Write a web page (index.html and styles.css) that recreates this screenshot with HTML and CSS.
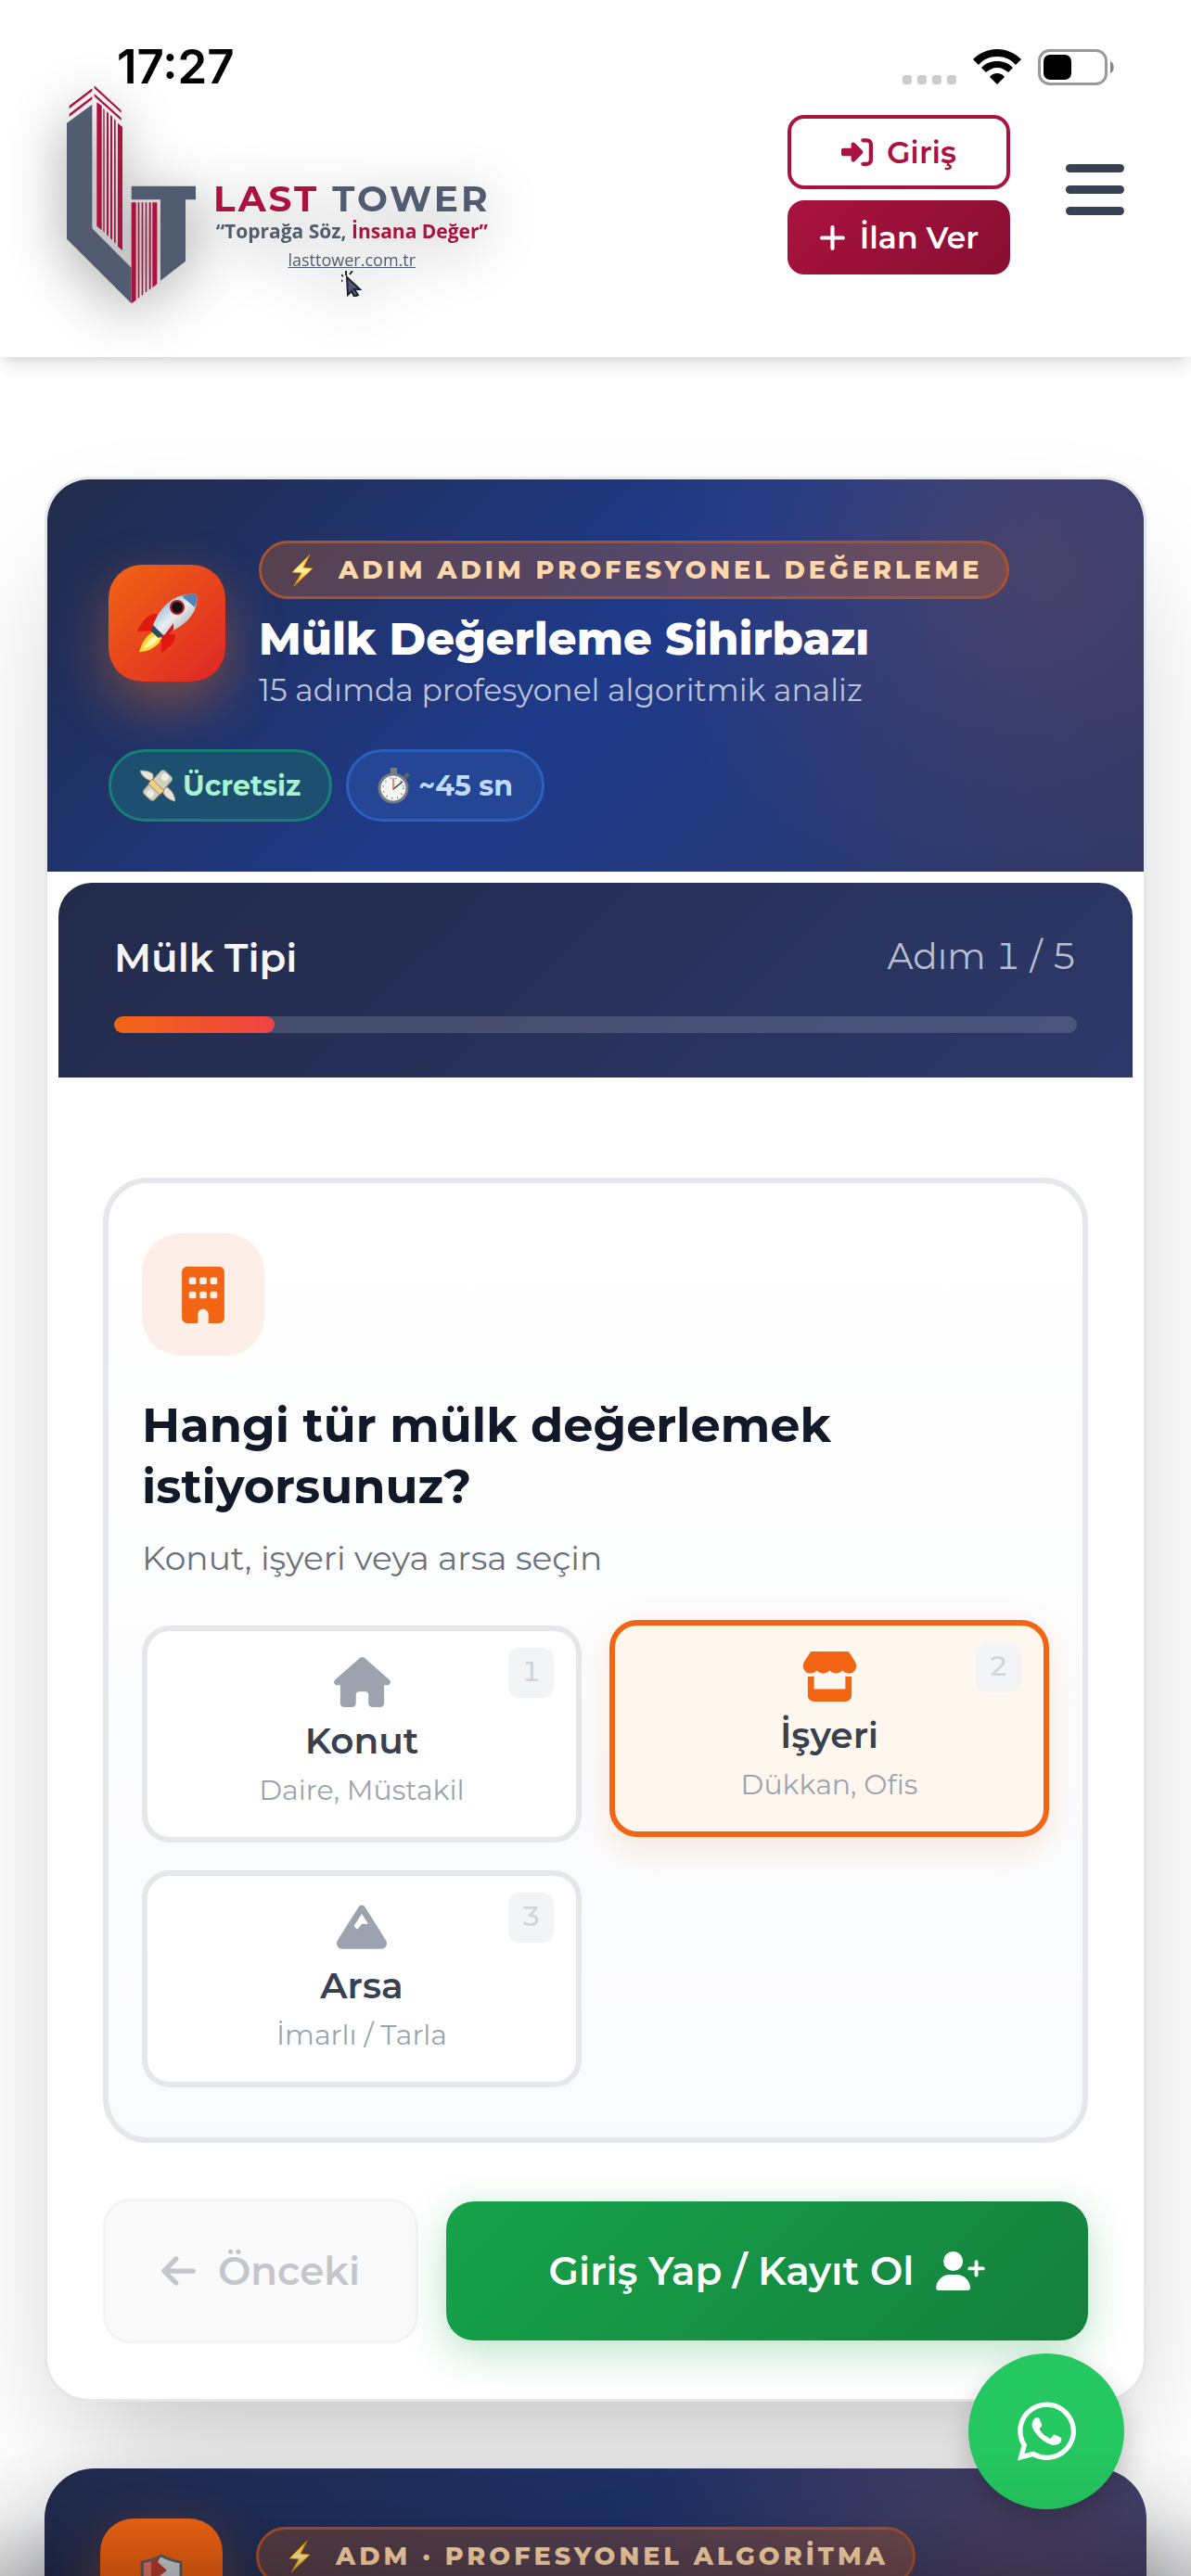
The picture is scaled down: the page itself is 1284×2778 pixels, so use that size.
FILE: index.html
```html
<!DOCTYPE html>
<html lang="tr">
<head>
<meta charset="utf-8">
<meta name="viewport" content="width=device-width, initial-scale=1">
<title>Last Tower</title>
<link rel="stylesheet" href="styles.css">
</head>
<body>
<svg class="defs" aria-hidden="true">
  <defs>
    <linearGradient id="boltFill" x1="0" y1="0" x2="0" y2="1"><stop offset="0" stop-color="#ffb81f"/><stop offset=".5" stop-color="#fff3a0"/><stop offset="1" stop-color="#f79c00"/></linearGradient>
    <linearGradient id="hull" x1="0" y1="0" x2="1" y2="1"><stop offset="0" stop-color="#5d9bd0"/><stop offset=".5" stop-color="#e9edf0"/><stop offset="1" stop-color="#8f9aa3"/></linearGradient>
    <symbol id="bolt" viewBox="0 0 24 36"><path d="M20 1 1 20l10 1L3 35l20-19-10-1z" fill="url(#boltFill)" stroke="#d98a00" stroke-width="1"/></symbol>
  </defs>
</svg>

<div class="app">
  <div class="status">
    <span class="status-time">17:27</span>
    <span class="status-icons">
      <span class="dots"><i></i><i></i><i></i><i></i></span>
      <svg width="52" height="38" viewBox="0 0 52 38" aria-hidden="true"><path d="M26 0C36 0 45 4 52 11L46 17C41 11 34 8 26 8S11 11 6 17L0 11C7 4 16 0 26 0zM26 13c7 0 12 2 17 7l-5 5c-4-3-7-5-12-5s-8 2-12 5l-5-5c5-5 10-7 17-7zM26 26c3 0 6 1 8 4l-8 8-8-8c2-3 5-4 8-4z"/></svg>
      <svg width="83" height="39" viewBox="0 0 83 39" aria-hidden="true"><rect x="1.500" y="1.500" width="72" height="36" rx="11" fill="none" stroke="#999" stroke-width="3"/><rect x="6" y="6" width="30" height="27" rx="7"/><path d="M78 13c5 2 5 11 0 13z" fill="#888"/></svg>
    </span>
  </div>

  <header class="header">
    <a class="logo" href="#" aria-label="Last Tower">
      <svg width="140" height="236" viewBox="39 35 420 708" aria-hidden="true">
        <g fill="#525c70"><path d="M39 157 121 97V498L248 625V741L39 532z"/><path d="M248 361H456V405H423V604L342 667V405H248z"/></g>
        <g fill="#ab1240"><path d="M47 101 121 45V54L47 111zM47 127 121 71V80L47 137zM128 36 215 116V124L128 45zM128 62 215 140V149L128 71z"/>
        <path d="M136 90 152 101V504L136 490zM157 110 161 114V512L157 508zM168 120 174 125V524L168 518zM180 131 186 136V535L180 530zM192 144 197 148V547L192 542zM204 157 219 170V570L204 556z"/>
        <path d="M248 414H263V730L248 741zM269 414H274V721L269 725zM281 414H286V712L281 716zM293 414H298V702L293 706zM305 414H311V693L305 697zM316 414H331V678L316 690z"/></g>
      </svg>
      <span class="logo-text">
        <span class="logo-name"><b>LAST</b> TOWER</span>
        <span class="logo-tag">“Toprağa Söz, <b>İnsana Değer”</b></span>
        <span class="logo-url">lasttower.com.tr</span>
        <svg width="22" height="28" viewBox="0 0 22 28" aria-hidden="true"><path d="M6 7 20 20h-6l4 6-4 2-3-6-4 4z" fill="#525c70" stroke="#1c2233" stroke-width="2"/><path d="M5 5 5 0M2 6-1 4M9 4l3-4M1 10l-2 2" stroke="#222" stroke-width="2"/></svg>
      </span>
    </a>
    <div class="header-side">
      <div class="header-actions">
        <button class="btn btn-outline" type="button"><svg width="34" height="34" viewBox="0 0 512 512" aria-hidden="true"><path d="M217.900 105.900L340.700 228.700c7.200 7.200 11.300 17.100 11.300 27.300s-4.100 20.100-11.300 27.300L217.900 406.100c-6.400 6.400-15 9.900-24 9.900c-18.700 0-33.900-15.200-33.900-33.900l0-62.100L32 320c-17.700 0-32-14.300-32-32l0-64c0-17.700 14.300-32 32-32l128 0 0-62.100c0-18.700 15.200-33.900 33.900-33.900c9 0 17.600 3.600 24 9.900zM352 416l64 0c17.700 0 32-14.300 32-32l0-256c0-17.700-14.300-32-32-32l-64 0c-17.700 0-32-14.300-32-32s14.300-32 32-32l64 0c53 0 96 43 96 96l0 256c0 53-43 96-96 96l-64 0c-17.700 0-32-14.300-32-32s14.300-32 32-32z"/></svg>Giriş</button>
        <button class="btn btn-solid" type="button"><svg width="29" height="33" viewBox="0 0 448 512" aria-hidden="true"><path d="M256 80c0-17.700-14.300-32-32-32s-32 14.300-32 32V224H48c-17.700 0-32 14.300-32 32s14.300 32 32 32H192V432c0 17.700 14.300 32 32 32s32-14.300 32-32V288H400c17.700 0 32-14.300 32-32s-14.300-32-32-32H256V80z"/></svg>İlan Ver</button>
      </div>
      <button class="menu" type="button" aria-label="Menü"><i></i><i></i><i></i></button>
    </div>
  </header>

  <main class="main">
    <section class="card">
      <div class="hero">
        <div class="hero-row">
          <span class="hero-icon">
            <svg width="66" height="64" viewBox="0 0 66 64" aria-hidden="true"><path d="M22 22C12 22 6 30 1 41l20-1zM42 44c1 8-5 13-15 20l0-20z" fill="#e0190f"/><path d="M20 40C9 46 6 54 3 63c9 0 18-4 25-14z" fill="#ffd83a"/><path d="M20 45c-6 4-9 9-12 14 7-2 12-4 16-10z" fill="#fff7b0"/><path d="M65 1C45-1 28 9 18 34c-1 4 7 12 11 11C52 36 68 21 65 1z" fill="url(#hull)"/><path d="M65 1c-6-1-12 0-16 2l14 12c2-4 3-9 2-14z" fill="#4e84bb"/><path d="M18 34l-2 7 8 7 5-3z" fill="#2d4a66"/><circle cx="44" cy="15" r="8" fill="#c21b1b"/><circle cx="44" cy="15" r="6" fill="#0c1418"/><path d="M40 32 25 52l3-1 12-12z" fill="#d3171b"/></svg>
          </span>
          <div class="hero-text">
            <span class="badge"><svg width="24" height="36" aria-hidden="true"><use href="#bolt"/></svg>ADIM ADIM PROFESYONEL DEĞERLEME</span>
            <h1 class="hero-title">Mülk Değerleme Sihirbazı</h1>
            <p class="hero-sub">15 adımda profesyonel algoritmik analiz</p>
          </div>
        </div>
        <div class="chips">
          <span class="chip chip-green"><svg width="38" height="36" viewBox="0 0 38 36" aria-hidden="true"><path d="M14 13C9 13 2 9 0 2c6 0 11 1 14 4zM26 19c6 1 11 8 12 16-6-1-11-5-13-9z" fill="#e6e2d8" stroke="#a9a598" stroke-width="1"/><g transform="rotate(-48 19 18)"><rect x="2" y="10" width="34" height="16" rx="4" fill="#cfd0bf" stroke="#85877a"/><circle cx="7" cy="18" r="4" fill="#eeeee4"/><circle cx="31" cy="18" r="4" fill="#eeeee4"/></g><path d="m13 11 13 13-5 4L9 16z" fill="#efcf8a" stroke="#b48a3a"/></svg>Ücretsiz</span>
          <span class="chip chip-blue"><svg width="36" height="40" viewBox="0 0 36 40" aria-hidden="true"><path d="M14 1h7v6h-7z" fill="#777b84"/><path d="m28 10 4-4 3 3-4 4z" fill="#62666e"/><circle cx="17" cy="23" r="15" fill="#f6f6f4" stroke="#777b84" stroke-width="3"/><circle cx="17" cy="23" r="11" fill="none" stroke="#777" stroke-width="2" stroke-dasharray="1 5"/><path d="M17 24 27 16" stroke="#333" stroke-width="1.500"/><path d="M17 25V12" stroke="#e8663c" stroke-width="1.500"/></svg>~45 sn</span>
        </div>
      </div>

      <div class="body">
        <div class="progress-head">
          <div class="progress-row"><h2 class="progress-title">Mülk Tipi</h2><span class="progress-step">Adım 1 / 5</span></div>
          <div class="track" role="progressbar" aria-label="Mülk Tipi" aria-valuemin="0" aria-valuemax="6" aria-valuenow="1"><div class="fill"></div></div>
        </div>

        <div class="form">
          <section class="question">
            <span class="q-icon"><svg width="46" height="61" viewBox="0 0 384 512" aria-hidden="true"><path fill-rule="evenodd" d="M48 0C21.500 0 0 21.500 0 48V464c0 26.500 21.500 48 48 48h96V432c0-26.500 21.500-48 48-48s48 21.500 48 48v80h96c26.500 0 48-21.500 48-48V48c0-26.500-21.500-48-48-48H48zM64 240c0-8.800 7.200-16 16-16h32c8.800 0 16 7.200 16 16v32c0 8.800-7.200 16-16 16H80c-8.800 0-16-7.200-16-16V240zm112-16h32c8.800 0 16 7.200 16 16v32c0 8.800-7.200 16-16 16H176c-8.800 0-16-7.200-16-16V240c0-8.800 7.200-16 16-16zm80 16c0-8.800 7.200-16 16-16h32c8.800 0 16 7.200 16 16v32c0 8.800-7.200 16-16 16H272c-8.800 0-16-7.200-16-16V240zM80 96h32c8.800 0 16 7.200 16 16v32c0 8.800-7.200 16-16 16H80c-8.800 0-16-7.200-16-16V112c0-8.800 7.200-16 16-16zm80 16c0-8.800 7.200-16 16-16h32c8.800 0 16 7.200 16 16v32c0 8.800-7.200 16-16 16H176c-8.800 0-16-7.200-16-16V112zM272 96h32c8.800 0 16 7.200 16 16v32c0 8.800-7.200 16-16 16H272c-8.800 0-16-7.200-16-16V112c0-8.800 7.200-16 16-16z"/></svg></span>
            <h2 class="q-title">Hangi tür mülk değerlemek istiyorsunuz?</h2>
            <p class="q-sub">Konut, işyeri veya arsa seçin</p>
            <div class="options">
              <button class="option" type="button">
                <kbd class="key">1</kbd>
                <svg width="61" height="54" viewBox="0 0 576 512" aria-hidden="true"><path d="M575.800 255.500c0 18-15 32.100-32 32.100h-32l.7 160.200c0 2.700-.2 5.400-.5 8.100V472c0 22.100-17.900 40-40 40H456c-1.100 0-2.200 0-3.300-.1c-1.400 .1-2.800 .1-4.200 .1H416 392c-22.100 0-40-17.900-40-40V448 384c0-17.700-14.300-32-32-32H256c-17.700 0-32 14.300-32 32v64 24c0 22.100-17.900 40-40 40H160 128.100c-1.500 0-3-.1-4.500-.2c-1.200 .1-2.400 .2-3.600 .2H104c-22.100 0-40-17.900-40-40V360c0-.9 0-1.900 .1-2.800V287.600H32c-18 0-32-14-32-32.100c0-9 3-17 10-24L266.400 8c7-7 15-8 22-8s15 2 21 7L564.800 231.500c8 7 12 15 11 24z"/></svg>
                <span class="option-label">Konut</span><span class="option-sub">Daire, Müstakil</span>
              </button>
              <button class="option selected" type="button" aria-pressed="true">
                <kbd class="key">2</kbd>
                <svg width="61" height="54" viewBox="0 0 576 512" aria-hidden="true"><path d="M547.600 103.800L490.300 13.100C485.200 5 476.100 0 466.400 0H109.600C99.900 0 90.800 5 85.700 13.100L28.300 103.800c-29.600 46.800-3.400 111.900 51.900 119.400c4 .5 8.100 .8 12.100 .8c26.100 0 49.300-11.400 65.200-29c15.900 17.600 39.100 29 65.200 29c26.100 0 49.300-11.400 65.200-29c15.900 17.600 39.100 29 65.200 29c26.200 0 49.300-11.400 65.200-29c16 17.600 39.100 29 65.200 29c4.100 0 8.100-.3 12.100-.8c55.500-7.400 81.800-72.500 52.100-119.400zM499.700 254.900l-.1 0c-5.300 .7-10.700 1.100-16.200 1.100c-12.400 0-24.300-1.900-35.400-5.300V384H128V250.600c-11.200 3.500-23.200 5.400-35.600 5.400c-5.500 0-11-.4-16.300-1.100l-.1 0c-4.100-.6-8.100-1.300-12-2.300V384v64c0 35.300 28.700 64 64 64H448c35.300 0 64-28.700 64-64V384 252.600c-4 1-8 1.800-12.300 2.300z"/></svg>
                <span class="option-label">İşyeri</span><span class="option-sub">Dükkan, Ofis</span>
              </button>
              <button class="option" type="button">
                <kbd class="key">3</kbd>
                <svg width="54" height="54" viewBox="0 0 512 512" aria-hidden="true"><path d="M256 32c12.500 0 24.100 6.400 30.800 17L503.400 394.400c5.600 8.900 8.600 19.200 8.600 29.700c0 30.900-25 55.900-55.900 55.900H55.900C25 480 0 455 0 424.100c0-10.500 3-20.800 8.600-29.700L225.200 49c6.600-10.600 18.300-17 30.800-17zm65 192L256 120.400 176.900 246.500l18.300 24.400c6.400 8.500 19.200 8.500 25.600 0l25.600-34.100c6-8.100 15.500-12.800 25.600-12.800h49z"/></svg>
                <span class="option-label">Arsa</span><span class="option-sub">İmarlı / Tarla</span>
              </button>
            </div>
          </section>

          <div class="nav">
            <button class="nav-btn prev" type="button" disabled><svg width="37" height="42" viewBox="0 0 448 512" aria-hidden="true"><path d="M9.400 233.400c-12.500 12.500-12.500 32.800 0 45.300l160 160c12.500 12.500 32.800 12.500 45.300 0s12.500-32.800 0-45.300L109.200 288 416 288c17.700 0 32-14.300 32-32s-14.300-32-32-32l-306.700 0L214.600 118.600c12.500-12.500 12.500-32.800 0-45.300s-32.800-12.500-45.300 0l-160 160z"/></svg>Önceki</button>
            <button class="nav-btn next" type="button">Giriş Yap / Kayıt Ol<svg width="53" height="42" viewBox="0 0 640 512" aria-hidden="true"><path d="M96 128a128 128 0 1 1 256 0A128 128 0 1 1 96 128zM0 482.300C0 383.800 79.800 304 178.300 304h91.400C368.200 304 448 383.800 448 482.300c0 16.400-13.300 29.700-29.700 29.700H29.700C13.300 512 0 498.700 0 482.300zM504 312V248H440c-13.300 0-24-10.700-24-24s10.700-24 24-24h64V136c0-13.300 10.700-24 24-24s24 10.700 24 24v64h64c13.300 0 24 10.700 24 24s-10.700 24-24 24H552v64c0 13.300-10.700 24-24 24s-24-10.700-24-24z"/></svg></button>
          </div>
        </div>
      </div>
    </section>

    <section class="card-next">
      <span class="hero-icon shield">
        <svg width="46" height="56" viewBox="0 0 46 56" aria-hidden="true"><path d="M23 1C16 5 8 7 2 8v20c0 14 9 21 21 27 12-6 21-13 21-27V8C38 7 30 5 23 1z" fill="#c9ccd1"/><path d="M2 8c6-1 14-3 21-7L19 9l10 9-11 8 11 8-7 21C11 49 2 42 2 28z" fill="#b93a2c"/><path d="M4 9l8-2v36C7 39 4 35 4 28z" fill="#dd7466"/><path d="M23 2C16 6 8 8 2 9v19c0 14 9 20 21 26 12-6 21-12 21-26V9C38 8 30 6 23 2z" fill="none" stroke="#5d5d62" stroke-width="3"/></svg>
      </span>
      <span class="badge"><svg width="24" height="36" aria-hidden="true"><use href="#bolt"/></svg>ADM · PROFESYONEL ALGORİTMA</span>
    </section>
  </main>
</div>

<a class="whatsapp" href="#" aria-label="WhatsApp"><svg width="63" height="72" viewBox="0 0 448 512" aria-hidden="true"><path d="M380.900 97.100C339 55.100 283.200 32 223.900 32c-122.400 0-222 99.600-222 222 0 39.100 10.200 77.300 29.600 111L0 480l117.700-30.900c32.400 17.700 68.900 27 106.100 27h.1c122.300 0 224.100-99.600 224.100-222 0-59.300-25.200-115-67.100-157zm-157 341.600c-33.200 0-65.700-8.900-94-25.700l-6.700-4-69.800 18.300L72 359.200l-4.400-7c-18.500-29.400-28.200-63.300-28.200-98.200 0-101.700 82.800-184.500 184.600-184.500 49.300 0 95.600 19.200 130.400 54.100 34.800 34.900 56.200 81.200 56.100 130.500 0 101.800-84.900 184.600-186.600 184.600zm101.200-138.200c-5.500-2.800-32.800-16.200-37.900-18-5.100-1.900-8.800-2.800-12.500 2.800-3.700 5.600-14.300 18-17.600 21.800-3.200 3.700-6.500 4.200-12 1.400-32.600-16.300-54-29.100-75.500-66-5.700-9.800 5.700-9.100 16.300-30.300 1.800-3.700.9-6.900-.5-9.700-1.400-2.800-12.500-30.100-17.100-41.200-4.500-10.800-9.100-9.300-12.500-9.500-3.200-.2-6.900-.2-10.600-.2-3.700 0-9.700 1.400-14.800 6.900-5.100 5.600-19.400 19-19.400 46.300 0 27.300 19.900 53.700 22.600 57.400 2.800 3.700 39.100 59.700 94.800 83.800 35.200 15.200 49 16.500 66.600 13.900 10.700-1.600 32.800-13.400 37.400-26.400 4.600-13 4.600-24.100 3.200-26.400-1.300-2.500-5-3.900-10.500-6.600z"/></svg></a>
<div class="shade"></div>
</body>
</html>
```
FILE: styles.css
```css
*, *::before, *::after { box-sizing: border-box; }
body {
  margin: 0;
  font-family: Montserrat, Inter, "Open Sans", sans-serif;
  color: #111827;
  background: #fff;
}
h1, h2, p { margin: 0; }
button { font: inherit; cursor: pointer; }
svg { display: block; flex: none; fill: currentColor; }
.defs { position: absolute; width: 0; height: 0; }
.app { height: 100vh; overflow: hidden auto; scrollbar-width: none; }

/* Status bar, over the page header */
.status {
  position: absolute;
  inset: 0 0 auto;
  z-index: 3;
  display: flex;
  justify-content: space-between;
  padding: 53px 82px 0 126px;
  color: #000;
}
.status-time { font: 600 51px/38px Inter, sans-serif; }
.status-icons { display: flex; align-items: flex-start; gap: 18px; }
.dots { display: flex; gap: 6px; padding-top: 28px; }
.dots i { width: 10px; height: 10px; border-radius: 3px; background: #ccc; }

/* Header */
.header {
  position: relative;
  z-index: 2;
  display: flex;
  align-items: center;
  justify-content: space-between;
  padding: 92px 72px 57px;
  background: #fff;
  box-shadow: 0 12px 18px -3px rgba(0, 0, 0, .1), 0 6px 12px -6px rgba(0, 0, 0, .1);
}
.logo {
  display: flex;
  gap: 18px;
  color: #525c70;
  text-decoration: none;
  filter: drop-shadow(0 12px 30px rgba(0, 0, 0, .4));
}
.logo b { color: #ab1240; font-weight: inherit; }
.logo-text { display: flex; flex-direction: column; align-items: center; padding-top: 101px; }
.logo-name { font-size: 39px; line-height: 42px; font-weight: 700; letter-spacing: 3px; }
.logo-tag { font: 700 21px/28px "Open Sans", sans-serif; }
.logo-url { font: 400 18px/24px "Open Sans", sans-serif; text-decoration: underline; margin-top: 5px; }
.header-side { display: flex; align-items: center; gap: 60px; }
.header-actions { display: flex; flex-direction: column; gap: 12px; width: 240px; }
.btn {
  display: flex;
  align-items: center;
  justify-content: center;
  gap: 15px;
  height: 80px;
  border: 4px solid #ab1240;
  border-radius: 18px;
  font-size: 33px;
  font-weight: 600;
}
.btn-outline { background: #fff; color: #ab1240; }
.btn-solid { border: 0; background: linear-gradient(135deg, #ab1240, #870e31); color: #fff; }
.menu {
  display: flex;
  flex-direction: column;
  gap: 14px;
  width: 63px;
  padding: 0 0 12px;
  border: 0;
  background: none;
}
.menu i { height: 9px; border-radius: 5px; background: #374151; }

/* Wizard card */
.main { padding: 129px 48px 0; }
.card {
  border: 3px solid #e5e7eb;
  border-radius: 48px;
  background: #fff;
  overflow: hidden;
  box-shadow: 0 75px 150px -36px rgba(0, 0, 0, .25);
}
.hero {
  padding: 66px 66px 54px;
  background:
    radial-gradient(circle at 90% 20%, rgba(249, 115, 22, .16), transparent 420px),
    linear-gradient(135deg, #222b4a, #1e3a8a 50%, #2d3768);
}
.hero-row { display: flex; align-items: center; gap: 36px; }
.hero-icon {
  display: grid;
  place-items: center;
  flex: none;
  width: 126px;
  height: 126px;
  border-radius: 36px;
  background: linear-gradient(135deg, #f26514, #dc2626);
  box-shadow: 0 24px 60px rgba(249, 115, 22, .4);
}
.hero-text { display: flex; flex-direction: column; align-items: flex-start; }
.badge {
  display: flex;
  align-items: center;
  gap: 27px;
  height: 63px;
  padding: 0 26px 0 32px;
  border: 3px solid #a7522f;
  border-radius: 32px;
  background: rgba(249, 115, 22, .25);
  color: #fed7aa;
  font-size: 27px;
  font-weight: 800;
  letter-spacing: 4px;
  white-space: nowrap;
}
.hero-title { margin-top: 14px; font-size: 48px; line-height: 58px; font-weight: 800; color: #fff; }
.hero-sub { margin-top: 10px; font-size: 33px; line-height: 32px; font-weight: 400; color: #bcc2d8; }
.chips { display: flex; gap: 15px; margin-top: 48px; }
.chip {
  display: flex;
  align-items: center;
  gap: 8px;
  height: 78px;
  padding: 0 31px;
  border: 3px solid;
  border-radius: 39px;
  font-size: 30px;
  font-weight: 700;
}
.chip-green { border-color: #178074; background: #1d5070; color: #a7f3d0; }
.chip-blue { border-color: #2c5fc0; background: #254595; color: #bfdbfe; }

.body { padding: 12px 12px 60px; }
.progress-head {
  padding: 48px 60px;
  border-radius: 36px 36px 0 0;
  background: linear-gradient(135deg, #222b4a, #2d386a);
}
.progress-row { display: flex; justify-content: space-between; line-height: 66px; }
.progress-title { font-size: 42px; font-weight: 600; color: #f5f6f8; }
.progress-step { font-size: 39px; line-height: 63px; font-weight: 400; font-variant-numeric: tabular-nums; color: #b9bdcd; }
.track { height: 18px; margin-top: 30px; border-radius: 9px; background: rgba(255, 255, 255, .15); overflow: hidden; }
.fill { width: 16.667%; height: 100%; border-radius: 9px; background: linear-gradient(90deg, #f26514, #ef4444); }

.form { padding: 108px 48px 0; }
.question {
  padding: 54px 36px;
  border: 6px solid #e5e7eb;
  border-radius: 48px;
  background: linear-gradient(#fff, #f9fafc);
}
.q-icon {
  display: grid;
  place-items: center;
  width: 132px;
  height: 132px;
  border-radius: 42px;
  background: #fdeee7;
  color: #f26514;
}
.q-title { margin-top: 42px; font-size: 51px; line-height: 66px; font-weight: 700; }
.q-sub { margin-top: 17px; font-size: 36px; line-height: 54px; color: #6b7280; }
.options { display: grid; grid-template-columns: 1fr 1fr; gap: 30px; margin-top: 46px; }
.option {
  position: relative;
  display: flex;
  flex-direction: column;
  align-items: center;
  gap: 12px;
  padding: 28px 24px 32px;
  border: 6px solid #e5e7eb;
  border-radius: 30px;
  background: #fff;
  color: #9ca3af;
}
.option-label { font-size: 39px; line-height: 48px; font-weight: 600; color: #374151; }
.option-sub { font-size: 30px; line-height: 36px; }
.option.selected {
  border-color: #f26514;
  background: #fff7ed;
  color: #f26514;
  transform: translateY(-6px);
  box-shadow: 0 12px 36px rgba(242, 101, 20, .15);
}
.selected .option-sub { color: #9ca3af; }
.key {
  position: absolute;
  top: 18px;
  right: 24px;
  width: 49px;
  height: 54px;
  border-radius: 12px;
  background: #f3f4f6;
  color: #d1d5db;
  font: 500 30px/52px Montserrat, Inter, sans-serif;
  font-variant-numeric: tabular-nums;
  text-align: center;
}

.nav { display: flex; align-items: center; gap: 30px; margin-top: 60px; }
.nav-btn {
  display: flex;
  align-items: center;
  justify-content: center;
  gap: 24px;
  height: 150px;
  border: 0;
  border-radius: 30px;
  font-size: 42px;
  font-weight: 600;
  white-space: nowrap;
}
.prev {
  flex: 0 0 340px;
  height: 156px;
  border: 3px solid #f3f4f6;
  background: #fafafa;
  color: #c4c6cc;
}
.next {
  flex: 1;
  background: linear-gradient(135deg, #16a34a, #15803d);
  color: #fff;
  box-shadow: 0 12px 45px rgba(22, 163, 74, .3);
}

/* Next card, cut by the bottom of the screen */
.card-next {
  display: flex;
  align-items: flex-start;
  gap: 36px;
  margin-top: 72px;
  padding: 54px 60px 0;
  border-radius: 54px 54px 0 0;
  background:
    radial-gradient(circle at 88% 70%, rgba(249, 115, 22, .15), transparent 400px),
    linear-gradient(100deg, #222b4d, #1e3065 50%, #333a70);
  box-shadow: 0 60px 90px rgba(15, 20, 45, .4);
  position: relative;
}
.shield { width: 132px; height: 132px; background: linear-gradient(#f26514, #e8590c); }
.card-next .badge { margin-top: 9px; }

.whatsapp {
  position: fixed;
  right: 72px;
  bottom: 72px;
  z-index: 4;
  display: grid;
  place-items: center;
  width: 168px;
  height: 168px;
  border-radius: 50%;
  background: #25c760;
  color: #fff;
  box-shadow: 0 12px 30px rgba(0, 0, 0, .2);
}
.shade {
  position: fixed;
  inset: auto 0 0;
  z-index: 5;
  height: 138px;
  background: linear-gradient(transparent, rgba(0, 0, 0, .05) 50%, rgba(0, 0, 0, .2));
  pointer-events: none;
}
```
